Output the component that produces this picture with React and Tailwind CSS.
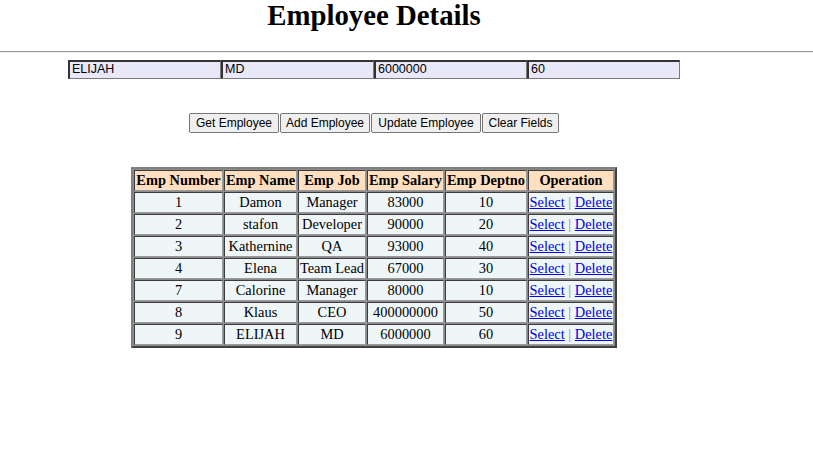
import React from "react";

const rows = [
  ["1", "Damon", "Manager", "83000", "10"],
  ["2", "stafon", "Developer", "90000", "20"],
  ["3", "Kathernine", "QA", "93000", "40"],
  ["4", "Elena", "Team Lead", "67000", "30"],
  ["7", "Calorine", "Manager", "80000", "10"],
  ["8", "Klaus", "CEO", "400000000", "50"],
  ["9", "ELIJAH", "MD", "6000000", "60"],
];

const inputs = ["ELIJAH", "MD", "6000000", "60"];

const cell =
  "h-[21px] p-0 leading-[19px] border border-t-[#3c3c3c] border-l-[#3c3c3c] border-b-[#9a9a9a] border-r-[#9a9a9a] text-center whitespace-nowrap";

export default function App() {
  return (
    <div className="w-[813px] h-[466px] bg-white text-black overflow-hidden">
      <div className="w-[748px] flex flex-col items-center pt-[1px]">
        <h1 className="m-0 h-[28px] leading-[28px] text-[28.8px] font-bold font-['Liberation_Serif',serif]">
          Employee Details
        </h1>
      </div>
      <div className="mt-[22px] h-[2px] border-t border-t-[#9a9a9a] border-b border-b-[#eeeeee]" />
      <div className="w-[748px] flex flex-col items-center">
        <div className="mt-[7px] flex">
          {inputs.map((v, i) => (
            <div
              key={i}
              className="w-[153px] h-[19px] bg-[#e8e8f8] border-t-2 border-l-2 border-b border-r border-t-[#333333] border-l-[#333333] border-b-[#7a7a7a] border-r-[#7a7a7a] pl-[2px] text-[12.5px] leading-[15px] font-['Liberation_Sans',Arial,sans-serif]"
            >
              {v}
            </div>
          ))}
        </div>
        <div className="mt-[34px] flex gap-[1px] font-['Liberation_Sans',Arial,sans-serif] text-[12px]">
          {[
            ["Get Employee", "w-[90px]"],
            ["Add Employee", "w-[90px]"],
            ["Update Employee", "w-[110px]"],
            ["Clear Fields", "w-[77px]"],
          ].map(([t, w]) => (
            <button
              key={t}
              className={`${w} h-[20px] bg-[#efefef] border border-[#767676] rounded-[2px] text-black leading-[18px] p-0`}
            >
              {t}
            </button>
          ))}
        </div>
        <table className="mt-[34px] border-separate border-spacing-[1px] bg-[#8c8c8c] border-2 border-t-[#808080] border-l-[#808080] border-b-[#404040] border-r-[#404040] font-['Liberation_Serif',serif] text-[14.4px]">
          <thead>
            <tr className="bg-[#ffdfbf]">
              {[
                ["Emp Number", "w-[89px]"],
                ["Emp Name", "w-[73px]"],
                ["Emp Job", "w-[68px]"],
                ["Emp Salary", "w-[77px]"],
                ["Emp Deptno", "w-[82px]"],
                ["Operation", "w-[86px]"],
              ].map(([t, w]) => (
                <th key={t} className={`${cell} ${w} font-bold`}>
                  {t}
                </th>
              ))}
            </tr>
          </thead>
          <tbody>
            {rows.map((r) => (
              <tr key={r[0]} className="bg-[#eef6f7]">
                {r.map((c, i) => (
                  <td key={i} className={cell}>
                    {c}
                  </td>
                ))}
                <td className={cell}>
                  <a href="#" className="text-[#0000ee] underline">
                    Select
                  </a>
                  <span className="text-[#8a8a8a]"> | </span>
                  <a href="#" className="text-[#0000ee] underline">
                    Delete
                  </a>
                </td>
              </tr>
            ))}
          </tbody>
        </table>
      </div>
    </div>
  );
}
